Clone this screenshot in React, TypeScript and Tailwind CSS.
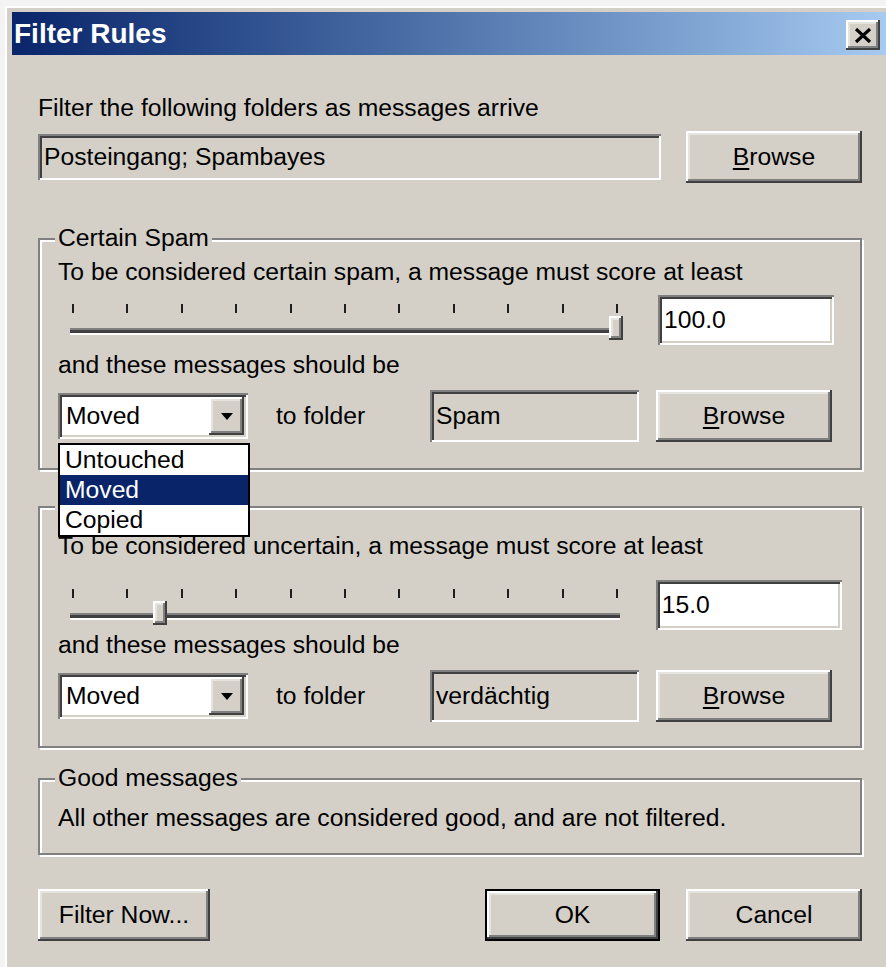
import type {ReactNode} from "react";

// classic 3D bevels, doubled for the large dialog scale
const raised =
    "bg-[#d4d0c8] shadow-[inset_-2px_-2px_#404040,inset_2px_2px_#ffffff,inset_-4px_-4px_#808080,inset_4px_4px_#e6e4df]";
const sunken =
    "shadow-[inset_2px_2px_#808080,inset_-2px_-2px_#ffffff,inset_4px_4px_#404040,inset_-4px_-4px_#d4d0c8]";

function Button({children, className = "", isDefault = false}: {children: ReactNode; className?: string; isDefault?: boolean}) {
    if (isDefault) {
        return (
            <div className={`border-2 border-black ${className}`}>
                <div className={`w-full h-full flex items-center justify-center ${raised}`}>{children}</div>
            </div>
        );
    }
    return <div className={`flex items-center justify-center ${raised} ${className}`}>{children}</div>;
}

function Browse() {
    return (
        <Button className="w-[176px] h-[52px]">
            <span>
                <span className="underline underline-offset-[3px]">B</span>rowse
            </span>
        </Button>
    );
}

function Field({text, className = ""}: {text: string; className?: string}) {
    return (
        <div className={`bg-[#d4d0c8] flex items-center pl-[6px] ${sunken} ${className}`}>
            {text}
        </div>
    );
}

function Combo({open = false}: {open?: boolean}) {
    return (
        <div className="relative">
            <div className={`w-[190px] h-[46px] bg-white flex p-[4px] ${sunken}`}>
                <span className="flex-1 pl-[4px] leading-[38px]">Moved</span>
                <span className={`w-[35px] flex items-center justify-center ${raised}`}>
                    <svg width="12" height="7" viewBox="0 0 12 7">
                        <path d="M0 0h12L6 7z" fill="#000" />
                    </svg>
                </span>
            </div>
            {open && (
                <div className="absolute z-10 left-0 top-[50px] w-[192px] bg-white border-2 border-black flex flex-col">
                    <span className="h-[30px] leading-[30px] pl-[5px]">Untouched</span>
                    <span className="h-[30px] leading-[30px] pl-[5px] bg-[#0a246a] text-white">Moved</span>
                    <span className="h-[30px] leading-[30px] pl-[5px]">Copied</span>
                </div>
            )}
        </div>
    );
}

function Slider({value}: {value: number}) {
    const left = 14 + (value / 100) * 537;
    return (
        <div className="relative w-[582px] mt-[9px]">
            <div className="ml-[14px] w-[546px] flex justify-between">
                {Array.from({length: 11}).map((_, i) => (
                    <span key={i} className="w-[2px] h-[9px] bg-[#1e1e1e]" />
                ))}
            </div>
            <div className="ml-[12px] mt-[15px] w-[550px] h-[5px] bg-[#404040] border-t-2 border-[#808080] shadow-[0_2px_#ffffff]" />
            <div
                className={`absolute top-[12px] w-[14px] h-[24px] ${raised}`}
                style={{left}}
            />
        </div>
    );
}

function GroupBox({label, children, className = ""}: {label: string; children: ReactNode; className?: string}) {
    return (
        <div className={`border-2 border-[#808080] shadow-[inset_2px_2px_#ffffff,2px_2px_#ffffff] flex flex-col px-[18px] ${className}`}>
            <span className="-mt-[16px] -ml-[3px] self-start bg-[#d4d0c8] px-[3px] leading-[28px]">{label}</span>
            {children}
        </div>
    );
}

type SpamGroupProps = {
    label: string;
    text: string;
    value: number;
    score: string;
    folder: string;
    open?: boolean;
    textMt: string;
    rowMt: string;
    andMt: string;
    editW: string;
    className?: string;
};

function SpamGroup({label, text, value, score, folder, open, textMt, rowMt, andMt, editW, className = ""}: SpamGroupProps) {
    return (
        <GroupBox label={label} className={className}>
            <p className={`leading-[28px] ${textMt}`}>{text}</p>
            <div className={`flex items-start ${rowMt}`}>
                <Slider value={value} />
                <div className={`h-[50px] ml-[18px] bg-white flex items-center pl-[6px] ${sunken} ${editW}`}>
                    {score}
                </div>
            </div>
            <p className={`leading-[28px] ${andMt}`}>and these messages should be</p>
            <div className="flex items-center h-[52px] mt-[11px]">
                <Combo open={open} />
                <span className="w-[182px] pl-[28px]">to folder</span>
                <Field text={folder} className="w-[209px] h-[52px]" />
                <div className="ml-[17px]">
                    <Browse />
                </div>
            </div>
        </GroupBox>
    );
}

export default function App() {
    return (
        <div className="w-[886px] h-[967px] overflow-hidden bg-[#f3f3f3] pl-[5px] pt-[6px] font-['Liberation_Sans',Arial,sans-serif] text-[24.7px] text-black">
            <div className="h-full bg-[#d4d0c8] border-l-2 border-t-2 border-white pl-[5px] pt-[4px]">
                <div className="h-[43px] flex items-center justify-between bg-gradient-to-r from-[#0a246a] to-[#a6caf0]">
                    <span className="pl-[2px] text-white font-bold text-[28px]">Filter Rules</span>
                    <div className={`w-[34px] h-[30px] mr-[6px] mt-[3px] flex items-center justify-center ${raised}`}>
                        <svg width="18" height="15" viewBox="0 0 18 15">
                            <path d="M2 1l14 13M16 1L2 14" stroke="#000" strokeWidth="3.2" />
                        </svg>
                    </div>
                </div>

                <div className="flex flex-col pl-[26px] pr-[24px]">
                    <p className="mt-[39px] leading-[28px]">Filter the following folders as messages arrive</p>
                    <div className="mt-[8px] h-[53px] flex items-center justify-between">
                        <Field text="Posteingang; Spambayes" className="w-[623px] h-[46px]" />
                        <Browse />
                    </div>

                    <SpamGroup
                        className="mt-[55px] pb-[26px]"
                        label="Certain Spam"
                        text="To be considered certain spam, a message must score at least"
                        value={100}
                        score="100.0"
                        folder="Spam"
                        open
                        textMt="mt-[6px]"
                        rowMt="mt-[9px]"
                        andMt="mt-[6px]"
                        editW="w-[176px]"
                    />

                    <SpamGroup
                        className="mt-[36px] pb-[24px]"
                        label="Possible Spam"
                        text="To be considered uncertain, a message must score at least"
                        value={15}
                        score="15.0"
                        folder="verdächtig"
                        textMt="mt-[12px]"
                        rowMt="mt-[20px]"
                        andMt="mt-[1px]"
                        editW="w-[187px]"
                    />

                    <GroupBox label="Good messages" className="mt-[30px] pb-[21px]">
                        <p className="mt-[12px] leading-[28px]">All other messages are considered good, and are not filtered.</p>
                    </GroupBox>

                    <div className="mt-[34px] flex items-center">
                        <Button className="w-[172px] h-[52px]">Filter Now...</Button>
                        <Button isDefault className="ml-auto w-[175px] h-[52px]">OK</Button>
                        <Button className="ml-[26px] w-[176px] h-[52px]">Cancel</Button>
                    </div>
                </div>
            </div>
        </div>
    );
}
